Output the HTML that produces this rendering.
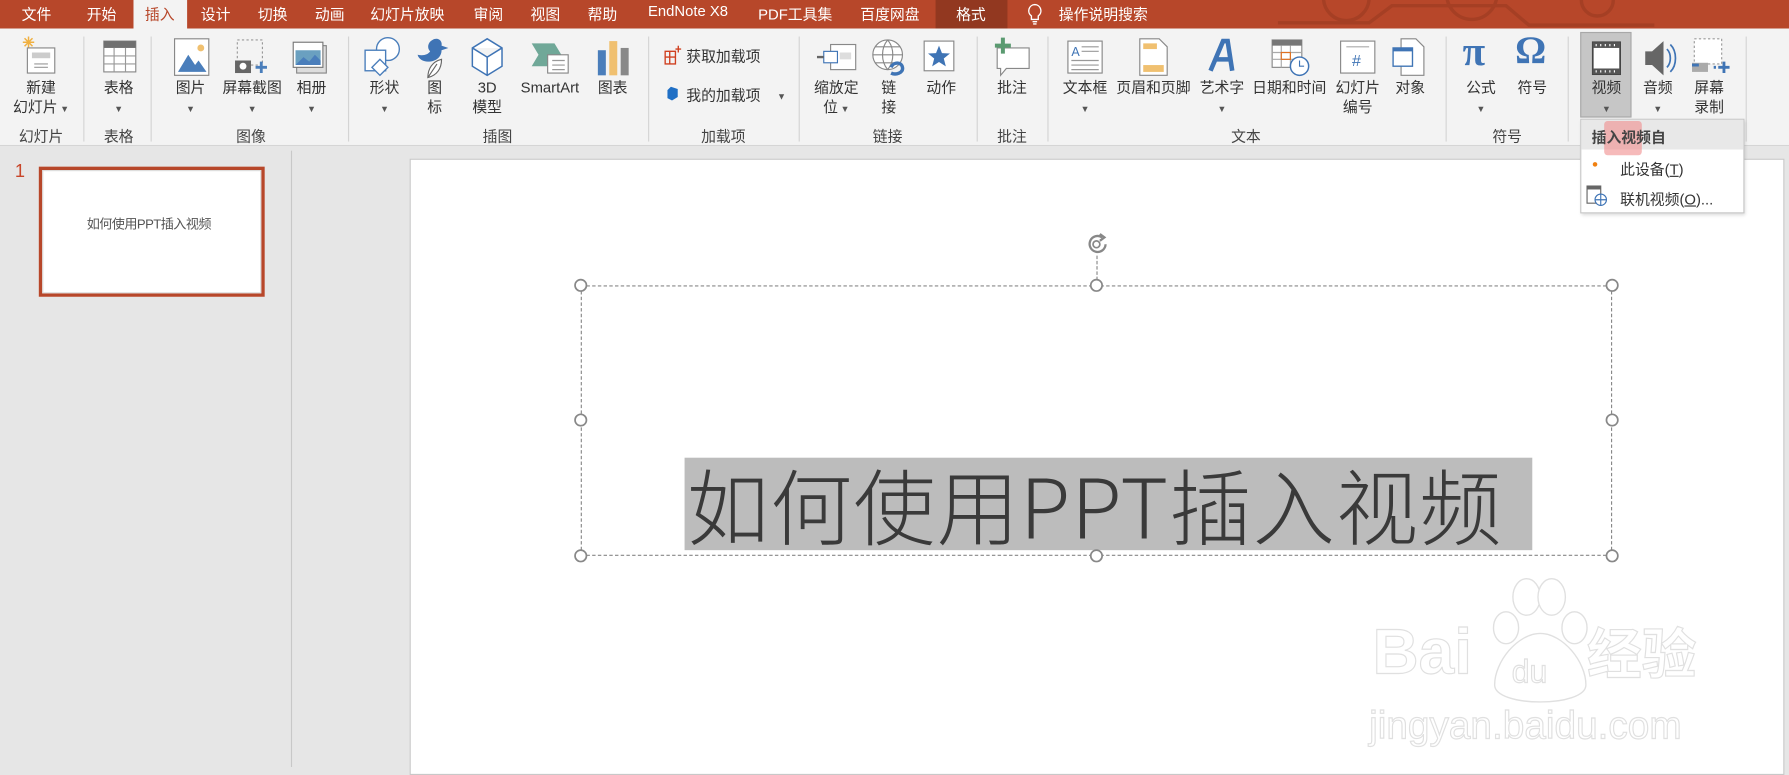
<!DOCTYPE html>
<html><head><meta charset="utf-8"><style>
*{margin:0;padding:0;box-sizing:border-box}
html,body{width:1789px;height:767px;overflow:hidden;background:#e6e6e6}
#w{position:absolute;left:0;top:0;width:1568px;height:672px;transform:scale(1.14094,1.1414);transform-origin:0 0;font-family:"Liberation Sans","Noto Sans CJK SC",sans-serif;color:#333;font-size:13px}
.a{position:absolute}
.t{position:absolute;top:2px;color:#fff;font-size:13px;transform:translateX(-50%);white-space:nowrap}
.l{position:absolute;transform:translateX(-50%);white-space:nowrap;font-size:13px;color:#333;text-align:center;line-height:17px}
.g{position:absolute;top:109px;transform:translateX(-50%);font-size:13px;color:#444;white-space:nowrap}
.s{position:absolute;top:32px;width:1px;height:92px;background:#d4d4d4}
.ar{font-size:8px;color:#555}
svg{position:absolute}
</style></head><body><div id="w">
<div class="a" style="left:0;top:0;width:1568px;height:25px;background:#b7472a"></div>
<svg style="left:1120px;top:0" width="448" height="25"><g stroke="#a53f24" stroke-width="3" fill="none"><circle cx="60" cy="-2" r="20"/><circle cx="170" cy="-5" r="22"/><path d="M0 20 H80 L100 5 H200 L220 22 H330"/><circle cx="280" cy="0" r="14"/></g></svg>
<div class="a" style="left:117px;top:0;width:47px;height:26px;background:#f3f3f3"></div>
<div class="a" style="left:820px;top:0;width:63px;height:25px;background:#923820"></div>
<div class="t" style="left:32px">文件</div>
<div class="t" style="left:89px">开始</div>
<div class="t" style="left:140px;color:#b7472a">插入</div>
<div class="t" style="left:189px">设计</div>
<div class="t" style="left:239px">切换</div>
<div class="t" style="left:289px">动画</div>
<div class="t" style="left:357px">幻灯片放映</div>
<div class="t" style="left:428px">审阅</div>
<div class="t" style="left:478px">视图</div>
<div class="t" style="left:528px">帮助</div>
<div class="t" style="left:603px">EndNote X8</div>
<div class="t" style="left:697px">PDF工具集</div>
<div class="t" style="left:780px">百度网盘</div>
<div class="t" style="left:851px">格式</div>
<svg style="left:900px;top:3px" width="14" height="19"><path d="M7 1a5.5 5.5 0 0 0-3 10v3h6v-3A5.5 5.5 0 0 0 7 1zM5 16h4M5.5 18h3" stroke="#fff" fill="none" stroke-width="1.2"/></svg>
<div class="t" style="left:967px">操作说明搜索</div>
<div class="a" style="left:0;top:25px;width:1568px;height:103px;background:#f3f3f3;border-bottom:1px solid #d5d5d5"></div>
<div class="s" style="left:73px"></div><div class="s" style="left:132px"></div><div class="s" style="left:305px"></div><div class="s" style="left:568px"></div><div class="s" style="left:700px"></div><div class="s" style="left:856px"></div><div class="s" style="left:918px"></div><div class="s" style="left:1267px"></div><div class="s" style="left:1374px"></div><div class="s" style="left:1530px"></div>
<svg style="left:14px;top:30px" width="40" height="36"><g stroke="#f0b040" stroke-width="1.3"><path d="M11 2v10M6 7h10M7.5 3.5l7 7M14.5 3.5l-7 7"/></g><rect x="10" y="12" width="24" height="22" fill="#fff" stroke="#888"/><rect x="14" y="16" width="16" height="5" fill="#ccc"/><path d="M16 26h12M16 29h12" stroke="#999"/></svg>
<svg style="left:90px;top:35px" width="30" height="30"><rect x="1" y="1" width="28" height="27" fill="#fff" stroke="#888"/><rect x="1" y="1" width="28" height="6" fill="#707070"/><path d="M1 14h28M1 21h28M10 7v21M20 7v21" stroke="#999"/></svg>
<svg style="left:152px;top:33px" width="32" height="34"><rect x="1" y="1" width="30" height="32" fill="#fff" stroke="#888"/><circle cx="24" cy="9" r="3" fill="#f0c070"/><path d="M4 30l9-15 6 9 3-4 7 10z" fill="#4a7ebb"/></svg>
<svg style="left:205px;top:33px" width="34" height="34"><rect x="3" y="2" width="22" height="22" fill="none" stroke="#999" stroke-dasharray="2 2"/><rect x="1" y="20" width="14" height="11" fill="#666"/><circle cx="8" cy="25" r="3" fill="#fff"/><path d="M24 21v10M19 26h10" stroke="#4a7ebb" stroke-width="2.5"/></svg>
<svg style="left:256px;top:36px" width="34" height="30"><rect x="4" y="4" width="26" height="24" fill="#ddd" stroke="#888"/><rect x="1" y="1" width="26" height="22" fill="#fff" stroke="#777"/><path d="M3 21V8h22v13z" fill="#6aa0c0"/><path d="M3 21l7-7 5 4 5-6 5 5v4z" fill="#4a7ebb"/></svg>
<svg style="left:318px;top:32px" width="36" height="36"><circle cx="22" cy="11" r="10" fill="#fff" stroke="#4a7ebb" stroke-width="1.2"/><rect x="2" y="12" width="18" height="18" fill="#fff" stroke="#4a7ebb" stroke-width="1.2"/><path d="M15 20l7 7-7 7-7-7z" fill="#fff" stroke="#4a7ebb" stroke-width="1.2"/></svg>
<svg style="left:365px;top:32px" width="32" height="38"><path d="M14 3c5-3 9 1 8 5l6 2-6 2c0 6-5 10-12 10-4 0-8-2-9-6 5 1 9 0 11-3-3-3-2-8 2-10z" fill="#3f74b5"/><path d="M10 36c0-8 4-14 12-16 0 8-4 14-12 16zM10 36l8-12" fill="#fff" stroke="#666"/></svg>
<svg style="left:412px;top:33px" width="30" height="34"><path d="M15 1l13 8v16l-13 8-13-8V9zM2 9l13 8 13-8M15 17v16" fill="#fff" stroke="#3f74b5" stroke-width="1.3"/></svg>
<svg style="left:465px;top:36px" width="36" height="30"><path d="M1 2h20l6 10-6 10H1l6-10z" fill="#70a898"/><rect x="15" y="12" width="18" height="16" fill="#fff" stroke="#888"/><path d="M19 17h11M19 21h11M19 25h11" stroke="#999"/></svg>
<svg style="left:523px;top:35px" width="30" height="32"><rect x="1" y="9" width="7" height="22" fill="#4a7ebb"/><rect x="11" y="1" width="7" height="30" fill="#f0c070"/><rect x="21" y="7" width="7" height="24" fill="#888"/></svg>
<svg style="left:582px;top:40px" width="16" height="18"><path d="M1 5h9v11H1zM1 10h9M5 5v11M10 3h5M12.5 0v6" stroke="#d04020" fill="none" stroke-width="1.2"/></svg>
<div class="l" style="left:634px;top:41px">获取加载项</div>
<svg style="left:583px;top:74px" width="14" height="16"><path d="M5 2l6 2v7l-5 3-4-2V5z" fill="#1f6fc5"/></svg>
<div class="l" style="left:634px;top:75px">我的加载项</div><div class="l ar" style="left:685px;top:76px">▼</div>
<svg style="left:716px;top:36px" width="36" height="30"><rect x="12" y="3" width="22" height="22" fill="#fff" stroke="#888"/><rect x="6" y="9" width="12" height="10" fill="#fff" stroke="#3f74b5"/><rect x="20" y="10" width="10" height="6" fill="#ddd"/><path d="M0 14h6" stroke="#666" stroke-width="2"/></svg>
<svg style="left:763px;top:33px" width="34" height="36"><circle cx="15" cy="15" r="13" fill="#fff" stroke="#888"/><path d="M2 15h26M15 2c-6 7-6 19 0 26M15 2c6 7 6 19 0 26M4 8h22M4 22h22" stroke="#888" fill="none"/><path d="M18 26c2-5 9-5 10 0s-6 7-10 5" stroke="#3f74b5" stroke-width="3" fill="none"/></svg>
<svg style="left:808px;top:34px" width="30" height="30"><rect x="2" y="2" width="26" height="26" fill="#fff" stroke="#888"/><path d="M15 6l2.6 6.5 7 .4-5.4 4.4 1.8 6.8L15 20.3 9 24.1l1.8-6.8-5.4-4.4 7-.4z" fill="#3f74b5"/></svg>
<svg style="left:870px;top:32px" width="36" height="36"><path d="M4 10h28v18H12l-5 6v-6H4z" fill="#fff" stroke="#888"/><path d="M9 1v14M2 8h14" stroke="#5a9a70" stroke-width="3.5"/></svg>
<svg style="left:935px;top:35px" width="32" height="30"><rect x="1" y="1" width="30" height="28" fill="#fff" stroke="#888"/><text x="4" y="14" font-size="11" fill="#3f74b5" font-family="Liberation Sans">A</text><path d="M13 6h15M13 10h15M4 18h24M4 22h24M4 26h24" stroke="#999"/></svg>
<svg style="left:998px;top:33px" width="26" height="34"><path d="M1 1h17l7 7v25H1z" fill="#fff" stroke="#888"/><rect x="4" y="5" width="12" height="5" fill="#f0c070"/><rect x="4" y="24" width="18" height="6" fill="#f0c070"/></svg>
<svg style="left:1058px;top:33px" width="26" height="32"><path d="M3 29L14 3h4l4 26M8 19h12" stroke="#3f74b5" stroke-width="4" fill="none"/></svg>
<svg style="left:1114px;top:34px" width="36" height="34"><rect x="1" y="1" width="26" height="24" fill="#fff" stroke="#888"/><rect x="1" y="1" width="26" height="5" fill="#777"/><path d="M1 12h26M1 18h26M9 6v19M17 6v19" stroke="#aaa"/><rect x="9" y="12" width="8" height="6" fill="none" stroke="#e07020"/><circle cx="25" cy="24" r="8" fill="#fff" stroke="#3f74b5" stroke-width="1.3"/><path d="M25 19v5h4" stroke="#3f74b5" fill="none"/></svg>
<svg style="left:1174px;top:35px" width="32" height="30"><rect x="1" y="1" width="30" height="28" fill="#fff" stroke="#888"/><path d="M6 6h20" stroke="#aaa"/><text x="11" y="23" font-size="14" fill="#3f74b5" font-family="Liberation Sans">#</text></svg>
<svg style="left:1220px;top:33px" width="30" height="34"><path d="M8 1h13l7 7v25H8z" fill="#fff" stroke="#888"/><rect x="1" y="9" width="17" height="16" fill="#fff" stroke="#3f74b5" stroke-width="1.2"/><rect x="1" y="9" width="17" height="3" fill="#3f74b5"/></svg>
<div class="a" style="left:1282px;top:24px;font-size:36px;color:#3f74b5;font-family:'Liberation Serif',serif;font-weight:bold">π</div>
<div class="a" style="left:1328px;top:26px;font-size:34px;color:#3f74b5;font-family:'Liberation Serif',serif;font-weight:bold">Ω</div>
<div class="a" style="left:1385px;top:28px;width:45px;height:75px;background:#c6c6c6;border:1px solid #a8a8a8"></div>
<svg style="left:1395px;top:36px" width="26" height="30"><rect x="1" y="1" width="24" height="28" fill="#fff" stroke="#444" stroke-width="1.5"/><rect x="1" y="1" width="24" height="5" fill="#555"/><rect x="1" y="24" width="24" height="5" fill="#555"/><path d="M4 2.5v2M8 2.5v2M12 2.5v2M16 2.5v2M20 2.5v2M4 25.5v2M8 25.5v2M12 25.5v2M16 25.5v2M20 25.5v2" stroke="#fff"/></svg>
<svg style="left:1440px;top:34px" width="30" height="34"><path d="M2 11h6l10-9v30L8 23H2z" fill="#666"/><path d="M21 9c4 4 4 12 0 16M24 5c6 6 6 18 0 24" stroke="#3f74b5" fill="none" stroke-width="1.5"/></svg>
<svg style="left:1482px;top:33px" width="34" height="34"><rect x="3" y="1" width="24" height="22" fill="#fff" stroke="#999" stroke-dasharray="2 2"/><rect x="1" y="22" width="14" height="8" fill="#aaa"/><path d="M1 24h6" stroke="#3f74b5" stroke-width="2.5"/><path d="M20 26h2M29 21v10M24 26h10" stroke="#3f74b5" stroke-width="2.5"/></svg>
<div class="l" style="left:36px;top:68px">新建<br>幻灯片<span class="ar"> ▼</span></div>
<div class="l" style="left:104px;top:68px">表格<br><span class="ar">▼</span></div>
<div class="l" style="left:167px;top:68px">图片<br><span class="ar">▼</span></div>
<div class="l" style="left:221px;top:68px">屏幕截图<br><span class="ar">▼</span></div>
<div class="l" style="left:273px;top:68px">相册<br><span class="ar">▼</span></div>
<div class="l" style="left:337px;top:68px">形状<br><span class="ar">▼</span></div>
<div class="l" style="left:381px;top:68px">图<br>标</div>
<div class="l" style="left:427px;top:68px">3D<br>模型</div>
<div class="l" style="left:482px;top:68px">SmartArt</div>
<div class="l" style="left:537px;top:68px">图表</div>
<div class="l" style="left:733px;top:68px">缩放定<br>位<span class="ar"> ▼</span></div>
<div class="l" style="left:779px;top:68px">链<br>接</div>
<div class="l" style="left:825px;top:68px">动作</div>
<div class="l" style="left:887px;top:68px">批注</div>
<div class="l" style="left:951px;top:68px">文本框<br><span class="ar">▼</span></div>
<div class="l" style="left:1011px;top:68px">页眉和页脚</div>
<div class="l" style="left:1071px;top:68px">艺术字<br><span class="ar">▼</span></div>
<div class="l" style="left:1130px;top:68px">日期和时间</div>
<div class="l" style="left:1190px;top:68px">幻灯片<br>编号</div>
<div class="l" style="left:1236px;top:68px">对象</div>
<div class="l" style="left:1298px;top:68px">公式<br><span class="ar">▼</span></div>
<div class="l" style="left:1343px;top:68px">符号</div>
<div class="l" style="left:1408px;top:68px">视频<br><span class="ar">▼</span></div>
<div class="l" style="left:1453px;top:68px">音频<br><span class="ar">▼</span></div>
<div class="l" style="left:1498px;top:68px">屏幕<br>录制</div>
<div class="g" style="left:36px">幻灯片</div><div class="g" style="left:104px">表格</div><div class="g" style="left:220px">图像</div><div class="g" style="left:436px">插图</div><div class="g" style="left:634px">加载项</div><div class="g" style="left:778px">链接</div><div class="g" style="left:887px">批注</div><div class="g" style="left:1092px">文本</div><div class="g" style="left:1321px">符号</div>
<div class="a" style="left:255px;top:132px;width:1px;height:540px;background:#c8c8c8"></div>
<div class="a" style="left:13px;top:142px;color:#c8462a;font-size:16px">1</div>
<div class="a" style="left:34px;top:146px;width:198px;height:114px;border:3px solid #b7472a;background:#fff;outline:1px solid #ddd;outline-offset:-4px"></div>
<div class="a" style="left:76px;top:188px;font-size:11.5px;color:#555;letter-spacing:-0.5px">如何使用PPT插入视频</div>
<div class="a" style="left:359px;top:139px;width:1205px;height:540px;background:#fff;border:1px solid #c8c8c8"></div>
<div class="a" style="left:509px;top:250px;width:904px;height:237px;border:1px dashed #888"></div>
<div class="a" style="left:961px;top:224px;width:0;height:26px;border-left:1px dashed #888"></div>
<svg style="left:950px;top:203px" width="24" height="22"><path d="M16 5A7 7 0 1 0 19 11" fill="none" stroke="#888" stroke-width="2"/><path d="M14 2l4 3-4 3" fill="none" stroke="#888" stroke-width="2"/><circle cx="11" cy="11" r="3" fill="none" stroke="#888" stroke-width="1.5"/></svg>
<div class="a" style="left:600px;top:401px;width:743px;height:81px;background:#bcbcbc"></div>
<div class="a" style="left:602px;top:396px;font-size:72px;color:#3a3a3a;line-height:90px;white-space:nowrap;letter-spacing:1px;font-family:'Noto Sans CJK SC',sans-serif;font-weight:300">如何使用PPT插入视频</div>
<svg style="left:501px;top:242px" width="922" height="254"><g fill="#fff" stroke="#888" stroke-width="1.5"><circle cx="8" cy="8" r="5"/><circle cx="460" cy="8" r="5"/><circle cx="912" cy="8" r="5"/><circle cx="8" cy="126" r="5"/><circle cx="912" cy="126" r="5"/><circle cx="8" cy="245" r="5"/><circle cx="460" cy="245" r="5"/><circle cx="912" cy="245" r="5"/></g></svg>
<svg style="left:1195px;top:500px" width="330" height="170"><g fill="#fff" stroke="#e0e0e0" stroke-width="1.2"><ellipse cx="143" cy="23" rx="12" ry="16"/><ellipse cx="165" cy="23" rx="12" ry="16"/><ellipse cx="125" cy="50" rx="11" ry="14"/><ellipse cx="185" cy="50" rx="11" ry="14"/><path d="M155 55c-20 0-40 25-40 45 0 20 80 20 80 0 0-20-20-45-40-45z"/></g>
<text x="8" y="90" font-size="56" font-family="Liberation Sans" font-weight="bold" fill="#fff" stroke="#e0e0e0">Bai</text>
<text x="130" y="98" font-size="28" font-family="Liberation Sans" fill="#fff" stroke="#e0e0e0">du</text>
<text x="196" y="90" font-size="48" font-family="Noto Sans CJK SC" font-weight="bold" fill="#fff" stroke="#e0e0e0">经验</text>
<text x="5" y="147" font-size="34" font-family="Liberation Sans" fill="#fff" stroke="#e0e0e0">jingyan.baidu.com</text></svg>
<div class="a" style="left:1385px;top:104px;width:144px;height:83px;background:#fff;border:1px solid #c6c6c6;box-shadow:1px 2px 3px rgba(0,0,0,.15)"></div>
<div class="a" style="left:1386px;top:105px;width:142px;height:26px;background:#e8e8e8"></div>
<div class="a" style="left:1406px;top:106px;width:33px;height:30px;background:rgba(240,140,140,.6);border-radius:3px"></div>
<div class="a" style="left:1395px;top:110px;font-size:13px;color:#444;font-weight:bold">插入视频自</div>
<div class="a" style="left:1396px;top:142px;width:4px;height:4px;border-radius:2px;background:#f08010"></div>
<div class="a" style="left:1420px;top:138px;font-size:13px">此设备(<u>T</u>)</div>
<svg style="left:1390px;top:162px" width="20" height="20"><rect x="1" y="1" width="12" height="15" fill="#fff" stroke="#666"/><rect x="1" y="1" width="12" height="3" fill="#666"/><circle cx="13" cy="13" r="5" fill="#fff" stroke="#3f74b5"/><path d="M8 13h10M13 8v10" stroke="#3f74b5"/></svg>
<div class="a" style="left:1420px;top:164px;font-size:13px">联机视频(<u>O</u>)...</div>
</div></body></html>
